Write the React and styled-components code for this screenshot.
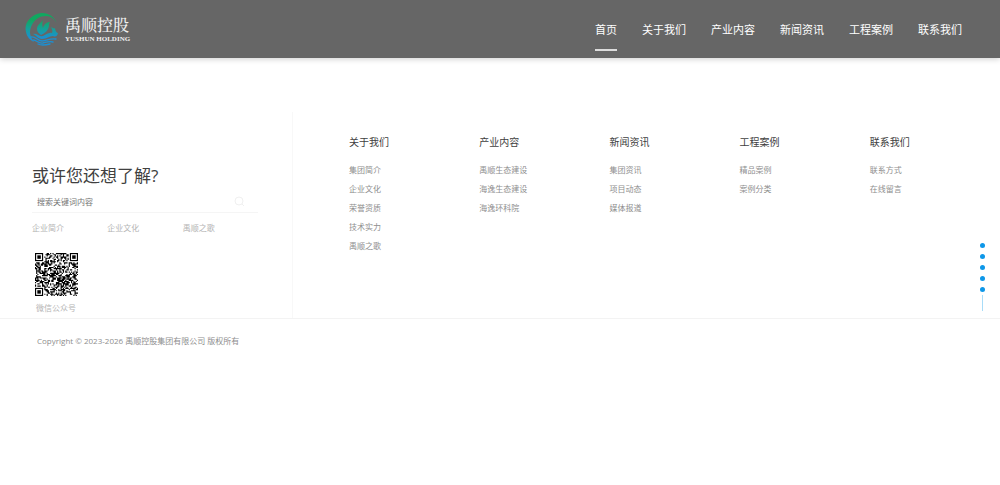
import React from 'react'
import styled, { createGlobalStyle } from 'styled-components'

const navItems = ['首页', '关于我们', '产业内容', '新闻资讯', '工程案例', '联系我们']

const quickLinks = ['企业简介', '企业文化', '禹顺之歌']

const columns = [
  { title: '关于我们', links: ['集团简介', '企业文化', '荣誉资质', '技术实力', '禹顺之歌'] },
  { title: '产业内容', links: ['禹顺生态建设', '海逸生态建设', '海逸环科院'] },
  { title: '新闻资讯', links: ['集团资讯', '项目动态', '媒体报道'] },
  { title: '工程案例', links: ['精品案例', '案例分类'] },
  { title: '联系我们', links: ['联系方式', '在线留言'] },
]

const sections = [1, 2, 3, 4, 5]

const GlobalStyle = createGlobalStyle`
  * {
    box-sizing: border-box;
    margin: 0;
    padding: 0;
  }
  body {
    background: #fff;
    color: #404040;
    font-family: "Open Sans", "Noto Sans CJK SC", sans-serif;
    font-size: 8px;
  }
  a {
    color: inherit;
    text-decoration: none;
  }
  ul {
    list-style: none;
  }
`

const Header = styled.header`
  display: flex;
  justify-content: space-between;
  align-items: center;
  height: 58px;
  padding: 0 38px 0 24px;
  background: #666;
  box-shadow: 0 1px 6px rgba(0, 0, 0, 0.2);
`

const Brand = styled.a`
  display: flex;
  align-items: center;
  gap: 3px;
  color: #f0f0f0;
`

const BrandText = styled.span`
  display: flex;
  flex-direction: column;
  white-space: nowrap;
  .cn {
    font-family: "Noto Serif CJK SC", "Noto Sans CJK SC", serif;
    font-size: 16px;
    font-weight: 500;
    line-height: 20px;
  }
  .en {
    font-family: "Liberation Serif", serif;
    font-size: 7px;
    font-weight: 700;
    line-height: 8px;
  }
`

const Nav = styled.nav`
  display: flex;
  gap: 25px;
`

const NavLink = styled.a`
  padding: 13px 0 10px;
  border-bottom: 2px solid ${props => (props.$active ? '#ddd' : 'transparent')};
  color: #fff;
  font-size: 11px;
  line-height: 18px;
`

const Footer = styled.footer`
  margin-top: 54px;
`

const FooterMain = styled.div`
  display: grid;
  grid-template-columns: 293px 1fr;
  min-height: 207px;
  border-bottom: 1px solid #f3f3f3;
`

const Aside = styled.div`
  padding: 51px 34px 0 32px;
  border-right: 1px solid #f8f8f8;
`

const Heading = styled.h2`
  font-size: 17px;
  font-weight: 400;
  line-height: 26px;
`

const SearchForm = styled.form`
  display: flex;
  align-items: flex-end;
  height: 24px;
  padding: 0 13px 2px 5px;
  border-bottom: 1px solid #f5f5f5;
`

const SearchInput = styled.input`
  flex: 1;
  min-width: 0;
  border: 0;
  outline: 0;
  background: transparent;
  font: inherit;
  line-height: 16px;
  &::placeholder {
    color: #757575;
    opacity: 1;
  }
`

const SearchButton = styled.button`
  display: flex;
  padding-bottom: 3px;
  border: 0;
  background: transparent;
  cursor: pointer;
`

const QuickLinks = styled.div`
  display: grid;
  grid-template-columns: repeat(3, 1fr);
  padding-top: 7px;
  color: #b4b4b4;
  line-height: 16px;
`

const QrBlock = styled.figure`
  display: flex;
  flex-direction: column;
  align-items: center;
  width: 48px;
  padding-top: 17px;
  color: #b4b4b4;
  line-height: 16px;
  figcaption {
    padding-top: 4px;
    white-space: nowrap;
  }
`

const Columns = styled.div`
  display: grid;
  grid-template-columns: repeat(5, 1fr);
  padding: 20px 0 0 56px;
`

const ColumnTitle = styled.h3`
  padding-bottom: 8px;
  font-size: 10px;
  font-weight: 400;
  line-height: 20px;
`

const ColumnLinks = styled.ul`
  color: #8e8e8e;
  line-height: 19px;
`

const Copyright = styled.p`
  padding: 14px 37px;
  color: #8e8e8e;
  line-height: 16px;
`

const SideNav = styled.nav`
  position: fixed;
  top: 50%;
  right: 15px;
  display: flex;
  flex-direction: column;
  align-items: center;
  gap: 3px;
`

const Dots = styled.div`
  display: flex;
  flex-direction: column;
  gap: 6px;
`

const Dot = styled.a`
  width: 5px;
  height: 5px;
  border-radius: 50%;
  background: #0e97e8;
`

const DotTail = styled.span`
  width: 1px;
  height: 16px;
  background: #a8dcf8;
`

const LogoMark = () => (
  <svg width="38" height="36" viewBox="0 0 38 36" aria-hidden="true">
    <defs>
      <linearGradient id="mark" x1="0" y1="0" x2="0" y2="36" gradientUnits="userSpaceOnUse">
        <stop offset="0.25" stopColor="#10a860" />
        <stop offset="0.5" stopColor="#16a09a" />
        <stop offset="0.75" stopColor="#1b8fd2" />
      </linearGradient>
    </defs>
    <g fill="url(#mark)">
      <path d="M33 13C30 4 21 0 13 3C5 6 0 13 2 21C3 26 6 29 10 31C6 26 5 21 7 16C10 8 16 5 22 5C27 5 31 8 33 13Z" />
      <path d="M19 9C16 13 13 14 13 18C13 21 15 22 17 24C21 22 24 20 25 15C25 13 25 12 26 11C23 11 20 13 19 17C18 14 18 12 19 9Z" />
      <path d="M9 23C13 22 15 26 19 25C22 24 24 21 28 22C29 20 28 18 27 16C29 17 30 18 31 17C31 20 33 22 34 22C33 26 31 26 29 25C25 25 23 28 18 28C14 28 12 24 9 23Z" />
    </g>
    <g fill="none" stroke="url(#mark)" strokeWidth="1.3" strokeLinecap="round">
      <path d="M7 26C12 25 13 30 18 30C23 30 25 27 32 28" />
      <path d="M9 29C13 29 14 33 19 32C23 31 25 30 29 31" />
      <path d="M14 33C18 35 22 34 26 33" />
    </g>
  </svg>
)

const QR_SIZE = 37

const inFinder = (x, y) => (
  (x < 8 && y < 8) || (x >= QR_SIZE - 8 && y < 8) || (x < 8 && y >= QR_SIZE - 8)
)

const buildQrPath = () => {
  let seed = 20233
  let d = ''
  for (let y = 0; y < QR_SIZE; y += 1) {
    for (let x = 0; x < QR_SIZE; x += 1) {
      seed = (seed * 16807) % 2147483647
      if (!inFinder(x, y) && seed % 100 < 53) d += `M${x} ${y}h1v1h-1z`
    }
  }
  return d
}

const qrPath = buildQrPath()

const QrCode = () => (
  <svg width="43" height="43" viewBox="0 0 37 37" role="img" aria-label="微信公众号">
    <path d={qrPath} fill="#000" />
    {[[0, 0], [30, 0], [0, 30]].map(([x, y]) => (
      <g key={`${x}-${y}`}>
        <rect x={x + 0.5} y={y + 0.5} width="6" height="6" fill="none" stroke="#000" />
        <rect x={x + 2} y={y + 2} width="3" height="3" />
      </g>
    ))}
  </svg>
)

const SearchIcon = () => (
  <svg width="11" height="11" viewBox="0 0 11 11" fill="none" stroke="#f0f0f0" aria-hidden="true">
    <circle cx="5" cy="5" r="4" />
    <path d="M8 8L10 10" />
  </svg>
)

const App = () => (
  <>
    <GlobalStyle />
    <Header>
      <Brand href="#">
        <LogoMark />
        <BrandText>
          <span className="cn">禹顺控股</span>
          <span className="en">YUSHUN HOLDING</span>
        </BrandText>
      </Brand>
      <Nav>
        {navItems.map((item, i) => (
          <NavLink key={item} href="#" $active={i === 0}>{item}</NavLink>
        ))}
      </Nav>
    </Header>
    <Footer>
      <FooterMain>
        <Aside>
          <Heading>或许您还想了解?</Heading>
          <SearchForm>
            <SearchInput type="text" placeholder="搜索关键词内容" aria-label="搜索关键词内容" />
            <SearchButton type="button" aria-label="搜索">
              <SearchIcon />
            </SearchButton>
          </SearchForm>
          <QuickLinks>
            {quickLinks.map(link => <a key={link} href="#">{link}</a>)}
          </QuickLinks>
          <QrBlock>
            <QrCode />
            <figcaption>微信公众号</figcaption>
          </QrBlock>
        </Aside>
        <Columns>
          {columns.map(({ title, links }) => (
            <div key={title}>
              <ColumnTitle>{title}</ColumnTitle>
              <ColumnLinks>
                {links.map(link => <li key={link}><a href="#">{link}</a></li>)}
              </ColumnLinks>
            </div>
          ))}
        </Columns>
      </FooterMain>
      <Copyright>Copyright © 2023-2026 禹顺控股集团有限公司 版权所有</Copyright>
    </Footer>
    <SideNav>
      <Dots>
        {sections.map(n => <Dot key={n} href="#" aria-label={`${n}`} />)}
      </Dots>
      <DotTail />
    </SideNav>
  </>
)

export default App
